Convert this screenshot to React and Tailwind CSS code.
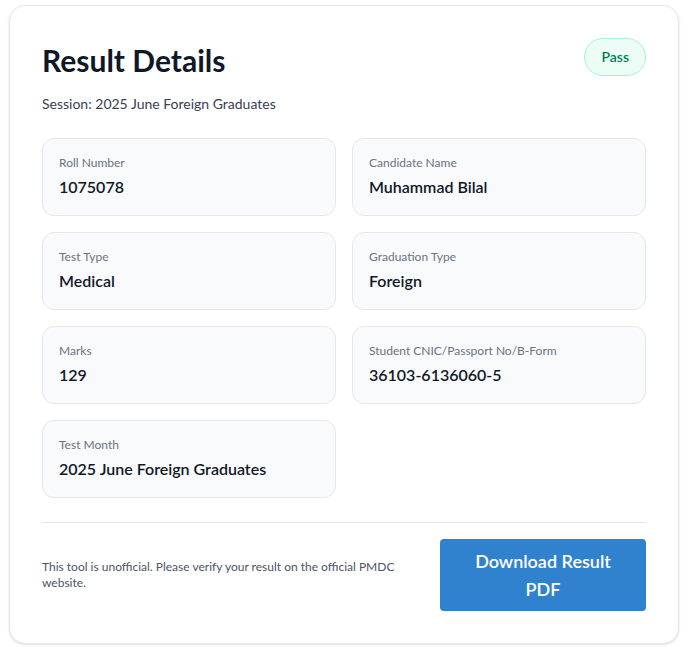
import React from "react";

const fields = [
  { label: "Roll Number", value: "1075078" },
  { label: "Candidate Name", value: "Muhammad Bilal" },
  { label: "Test Type", value: "Medical" },
  { label: "Graduation Type", value: "Foreign" },
  { label: "Marks", value: "129" },
  { label: "Student CNIC/Passport No/B-Form", value: "36103-6136060-5" },
  { label: "Test Month", value: "2025 June Foreign Graduates" },
];

export default function App() {
  return (
    <div
      className="pl-[9px] pt-[5px] pb-2 bg-white"
      style={{ fontFamily: 'Lato, "Noto Sans", sans-serif' }}
    >
      <div className="w-[670px] rounded-2xl border border-gray-200 bg-white p-8 shadow-sm">
        {/* header */}
        <div className="flex items-start justify-between">
          <h1 className="mt-1 text-3xl font-bold text-gray-900 leading-9">Result Details</h1>
          <span className="rounded-full border border-emerald-200 bg-emerald-50 px-4 py-2 text-sm font-semibold text-emerald-700">
            Pass
          </span>
        </div>
        <p className="mt-4 text-sm text-gray-700">Session: 2025 June Foreign Graduates</p>

        {/* details */}
        <div className="mt-6 grid grid-cols-2 gap-4">
          {fields.map((f) => (
            <div key={f.label} className="rounded-xl border border-gray-200 bg-gray-50 p-4">
              <p className="text-xs text-gray-500">{f.label}</p>
              <p className="mt-1 text-base font-semibold text-gray-900">{f.value}</p>
            </div>
          ))}
        </div>

        <div className="mt-6 flex items-center justify-between border-t border-gray-200 pt-4">
          <p className="w-[370px] text-xs leading-4 text-gray-600">
            This tool is unofficial. Please verify your result on the official PMDC website.
          </p>
          <button className="w-[206px] rounded bg-[#3182ce] px-4 py-2 text-lg font-semibold leading-7 text-white">
            Download Result PDF
          </button>
        </div>
      </div>
    </div>
  );
}
